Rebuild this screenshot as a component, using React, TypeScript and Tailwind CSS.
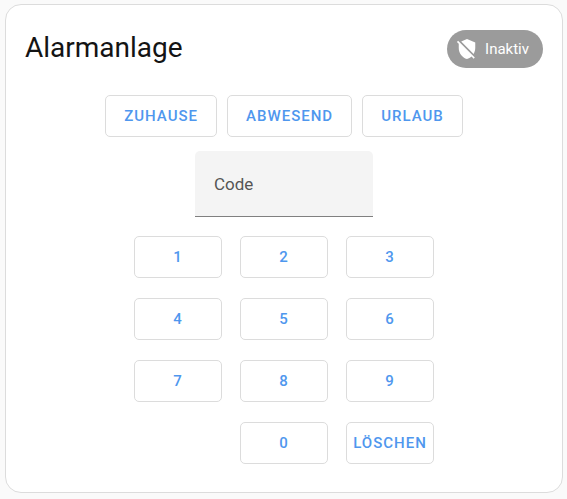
import { useState } from 'react'

const modes = ['Zuhause', 'Abwesend', 'Urlaub']
const digits = ['1', '2', '3', '4', '5', '6', '7', '8', '9', '0']

const buttonStyle =
  'h-[42px] rounded-[5px] border border-[#dcdcdc] text-[15px] font-medium uppercase tracking-[1px] text-[#4f97ee] hover:bg-blue-50'

const ShieldOffIcon = () => (
  <svg viewBox="0 0 24 24" className="size-[22px] fill-white" aria-hidden="true">
    <path d="M1,4.27L2.28,3L20.5,21.22L19.23,22.5L17,20.25C15.57,21.57 13.87,22.54 12,23C6.84,21.74 3,16.55 3,11V6.27L1,4.27M12,1L21,5V11C21,13.28 20.35,15.5 19.23,17.41L5.65,3.82L12,1Z" />
  </svg>
)

const App = () => {
  const [code, setCode] = useState('')

  return (
    <div className="min-h-screen bg-[#fafafa] pt-1 pr-1 pb-[6px] pl-[5px] font-['Roboto','Liberation_Sans',sans-serif]">
      <main className="rounded-2xl border border-[#dcdcdc] bg-white pb-7">
        <header className="flex items-start justify-between px-[19px] pt-[25px]">
          <h1 className="text-[28px] leading-9 text-[#141414]">Alarmanlage</h1>
          <button
            type="button"
            className="flex h-[38px] items-center gap-[7px] rounded-full bg-[#9b9b9b] pr-[14px] pl-[9px] text-[15px] font-normal text-white"
          >
            <ShieldOffIcon />
            Inaktiv
          </button>
        </header>

        <div className="mt-[27px] flex justify-center gap-[10px]">
          {modes.map((mode) => (
            <button key={mode} type="button" className={`${buttonStyle} px-[18px]`}>
              {mode}
            </button>
          ))}
        </div>

        <input
          type="password"
          aria-label="Code"
          placeholder="Code"
          value={code}
          onChange={(e) => setCode(e.target.value)}
          className="mx-auto mt-[14px] block h-[66px] w-[178px] rounded-t-[5px] border-b border-[#808080] bg-[#f4f4f4] px-[19px] text-[17px] text-[#555] outline-none placeholder:text-[#555]"
        />

        <div className="mt-[19px] grid grid-cols-[repeat(3,88px)] justify-center gap-x-[18px] gap-y-5">
          {digits.map((digit) => (
            <button
              key={digit}
              type="button"
              onClick={() => setCode(code + digit)}
              className={`${buttonStyle} ${digit === '0' ? 'col-start-2' : ''}`}
            >
              {digit}
            </button>
          ))}
          <button type="button" onClick={() => setCode('')} className={buttonStyle}>
            Löschen
          </button>
        </div>
      </main>
    </div>
  )
}

export default App
